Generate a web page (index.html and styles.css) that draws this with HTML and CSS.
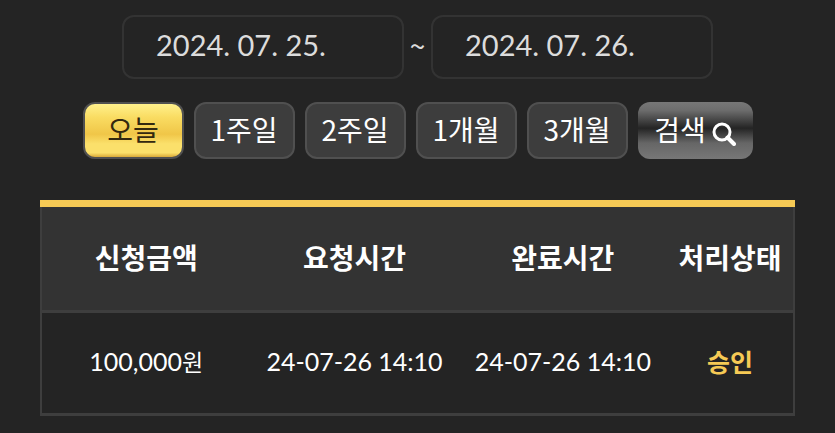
FILE: index.html
```html
<!DOCTYPE html>
<html lang="ko">
<head>
<meta charset="utf-8">
<meta name="viewport" content="width=device-width, initial-scale=1">
<title>신청 내역</title>
<link rel="stylesheet" href="styles.css">
</head>
<body>
<main class="history">
  <form class="filter">
    <div class="dates">
      <input class="date" type="text" aria-label="시작일" value="2024. 07. 25.">
      <span class="tilde">~</span>
      <input class="date" type="text" aria-label="종료일" value="2024. 07. 26.">
    </div>
    <div class="periods">
      <button class="btn btn-active" type="button">오늘</button>
      <button class="btn" type="button">1주일</button>
      <button class="btn" type="button">2주일</button>
      <button class="btn" type="button">1개월</button>
      <button class="btn" type="button">3개월</button>
      <button class="btn btn-search" type="submit">검색<svg class="icon" viewBox="0 0 24 24" aria-hidden="true"><circle cx="10" cy="10" r="8"/><path d="M15.5 15.5L22 22" stroke-width="4"/></svg></button>
    </div>
  </form>
  <div class="table-wrap">
    <table class="table">
      <thead>
        <tr><th>신청금액</th><th>요청시간</th><th>완료시간</th><th class="col-state">처리상태</th></tr>
      </thead>
      <tbody>
        <tr><td>100,000<span class="unit">원</span></td><td>24-07-26 14:10</td><td>24-07-26 14:10</td><td class="approved">승인</td></tr>
      </tbody>
    </table>
  </div>
</main>
</body>
</html>
```
FILE: styles.css
```css
* {
  box-sizing: border-box;
}

body {
  margin: 0;
  background: #242424;
  color: #fff;
  font-family: Lato, "Noto Sans CJK KR", sans-serif;
}

.history {
  padding: 15px 40px 17px;
}

.filter {
  display: flex;
  flex-direction: column;
  gap: 23px;
  margin-bottom: 41px;
}

.dates,
.periods {
  display: flex;
  justify-content: center;
}

.date {
  width: 282px;
  height: 64px;
  padding: 0 32px 5px;
  border: 2px solid #333;
  border-radius: 12px;
  background: transparent;
  color: #dcdcdc;
  font: 29px Lato, sans-serif;
}

.tilde {
  width: 27px;
  color: #dcdcdc;
  font-family: "Noto Sans CJK KR", sans-serif;
  font-size: 28px;
  line-height: 60px;
  text-align: center;
}

.periods {
  gap: 10px;
}

.btn {
  width: 101px;
  height: 57px;
  padding: 0 0 4px;
  border: 2px solid #505050;
  border-radius: 12px;
  background: #3d3d3d;
  color: #fff;
  font: 28px "Noto Sans CJK KR", sans-serif;
  line-height: 40px;
  white-space: nowrap;
}

.btn-active {
  background: linear-gradient(#fff08c, #f9dc62 25%, #f0c648 57%, #fbe06b 75%, #fbe06b 92%, #d9a938);
  color: #33280f;
}

.btn-search {
  display: flex;
  align-items: center;
  justify-content: center;
  gap: 6px;
  width: 115px;
  border: 0;
  background: linear-gradient(#777, #6c6c6c 15%, #242424 46%, #666 72%, #777);
}

.icon {
  width: 24px;
  height: 24px;
  margin-top: 10px;
  fill: none;
  stroke: #fff;
  stroke-width: 3;
  stroke-linecap: round;
}

.table-wrap {
  border-top: 7px solid #f6ca55;
}

.table {
  width: 100%;
  border-collapse: separate;
  border-spacing: 0;
  border: solid #3e3e3e;
  border-width: 0 2px 3px;
  table-layout: fixed;
  white-space: nowrap;
}

.table th {
  height: 106px;
  padding: 0 0 4px;
  border-bottom: 3px solid #3e3e3e;
  background: #333;
  font-size: 28px;
  font-weight: 700;
}

.table .col-state {
  width: 126px;
}

.table td {
  height: 100px;
  padding: 0 0 4px;
  font-size: 25px;
  text-align: center;
}

.table .unit {
  font-size: 23px;
}

.table .approved {
  color: #f6ca55;
  font-weight: 700;
}
```
